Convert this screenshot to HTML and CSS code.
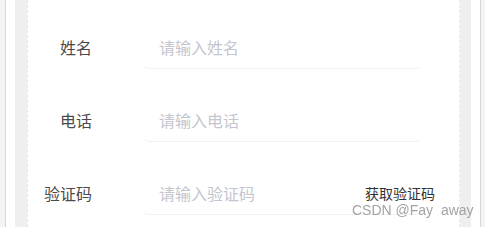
FILE: index.html
```html
<!DOCTYPE html>
<html lang="zh-CN">
<head>
    <meta charset="UTF-8">
    <meta name="viewport" content="width=device-width, initial-scale=1.0">
    <title>登记</title>
    <link rel="stylesheet" href="styles.css">
</head>
<body>
    <div class="frame">
        <div class="panel">
            <div class="content">
                <form class="info-form">
                    <div class="form-item">
                        <label for="name">姓名</label>
                        <div class="field">
                            <input type="text" id="name" placeholder="请输入姓名">
                        </div>
                    </div>
                    <div class="form-item">
                        <label for="phone">电话</label>
                        <div class="field">
                            <input type="text" id="phone" placeholder="请输入电话">
                        </div>
                    </div>
                    <div class="form-item">
                        <label for="code">验证码</label>
                        <div class="field">
                            <input type="text" id="code" placeholder="请输入验证码">
                            <span class="code-btn">获取验证码</span>
                        </div>
                    </div>
                </form>
            </div>
        </div>
    </div>

    <!-- watermark -->
    <div class="watermark">CSDN @Fay&nbsp;&nbsp;away</div>
</body>
</html>
```

FILE: styles.css
```css
* {
    margin: 0;
    padding: 0;
    box-sizing: border-box;
}

body {
    font-family: "Microsoft YaHei", "Noto Sans CJK SC", sans-serif;
    background: #f3f4f4;
    height: 100vh;
    overflow: hidden;
    padding: 0 4px 0 5px;
}

.frame {
    height: 100%;
    background: #fff;
    border-left: 1px solid #d8d8d8;
    border-right: 1px solid #d8d8d8;
    padding: 0 9px;
}

.panel {
    height: 100%;
    background: #efefef;
    padding: 0 11px 0 12px;
}

.content {
    height: 100%;
    background: #fff;
    border-left: 1px dashed #e6e6e6;
    border-right: 1px dashed #ececec;
}

.info-form {
    padding-top: 25px;
}

.form-item {
    display: flex;
    align-items: center;
    margin-bottom: 29px;
}

.form-item label {
    width: 64px;
    text-align: right;
    font-size: 16px;
    color: #4a4a4a;
    margin-right: 51px;
}

.field {
    position: relative;
    width: 279px;
}

.field input {
    width: 100%;
    height: 44px;
    border: none;
    border-bottom: 1px solid #f1f2f7;
    border-radius: 6px;
    padding-left: 16px;
    font-family: inherit;
    font-size: 16px;
    color: #333;
    outline: none;
    background: transparent;
}

.field input::placeholder {
    color: #c3c6cd;
}

.code-btn {
    position: absolute;
    right: -13px;
    top: 50%;
    transform: translateY(-50%);
    font-size: 14px;
    line-height: 16px;
    color: #333;
    cursor: pointer;
}

.watermark {
    position: fixed;
    left: 352px;
    top: 203px;
    font-family: "Liberation Sans", Arial, sans-serif;
    font-size: 14px;
    line-height: 14px;
    color: #a3a3a3;
    white-space: nowrap;
}
```
